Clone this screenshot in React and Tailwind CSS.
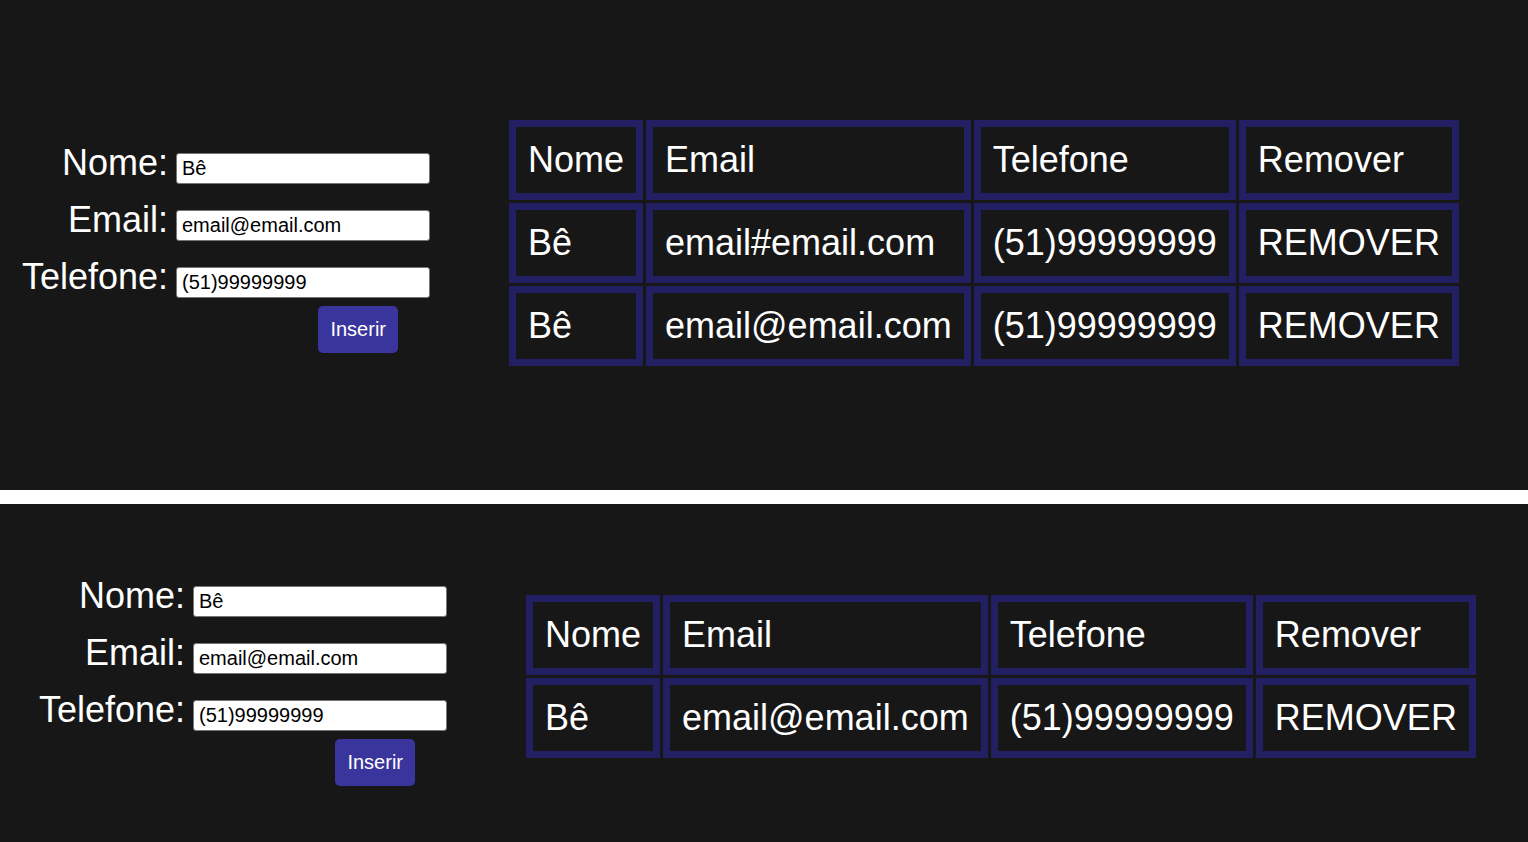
const contatosTopo = [
  { nome: 'Bê', email: 'email#email.com', telefone: '(51)99999999' },
  { nome: 'Bê', email: 'email@email.com', telefone: '(51)99999999' },
];

const contatosBaixo = [
  { nome: 'Bê', email: 'email@email.com', telefone: '(51)99999999' },
];

const Campo = ({ label, value }) => (
  <div className="flex items-baseline justify-end gap-[8px]">
    <label className="text-[36px] text-white leading-[1.15]">{label}</label>
    <input
      readOnly
      value={value}
      className="w-[254px] h-[31px] rounded-[3px] border border-[#767676] bg-white px-[5px] text-[20px] text-black outline-none"
    />
  </div>
);

const Celula = ({ children }) => (
  <td className="border-[7px] border-[#231f63] px-[12px] py-[12px] leading-[42px] whitespace-nowrap">{children}</td>
);

const Agenda = ({ contatos, className }) => {
  return (
    <div className={`flex items-center bg-[#171717] ${className}`}>
      {/* Formulario */}
      <form className="mt-[4px] flex w-[406px] flex-col gap-[15px]">
        <Campo label="Nome:" value="Bê" />
        <Campo label="Email:" value="email@email.com" />
        <Campo label="Telefone:" value="(51)99999999" />
        <button
          type="button"
          className="-mt-[7px] mr-[32px] self-end rounded-[5px] bg-[#3a359c] px-[12px] h-[47px] text-[20px] text-white"
        >
          Inserir
        </button>
      </form>

      {/* Tabela */}
      <table className="mb-[4px] ml-[76px] border-separate border-spacing-[3px] text-[36px] text-white">
        <thead>
          <tr className="text-left">
            <Celula>Nome</Celula>
            <Celula>Email</Celula>
            <Celula>Telefone</Celula>
            <Celula>Remover</Celula>
          </tr>
        </thead>
        <tbody>
          {contatos.map((c, i) => (
            <tr key={i}>
              <Celula>{c.nome}</Celula>
              <Celula>{c.email}</Celula>
              <Celula>{c.telefone}</Celula>
              <Celula>REMOVER</Celula>
            </tr>
          ))}
        </tbody>
      </table>
    </div>
  );
};

export default function App() {
  return (
    <div className="h-[842px] overflow-hidden bg-[#171717] font-['Liberation_Sans',Arial,sans-serif]">
      <Agenda contatos={contatosTopo} className="h-[490px] pl-[24px]" />
      <div className="h-[14px] bg-white" />
      <Agenda contatos={contatosBaixo} className="h-[348px] pl-[41px]" />
    </div>
  );
}
